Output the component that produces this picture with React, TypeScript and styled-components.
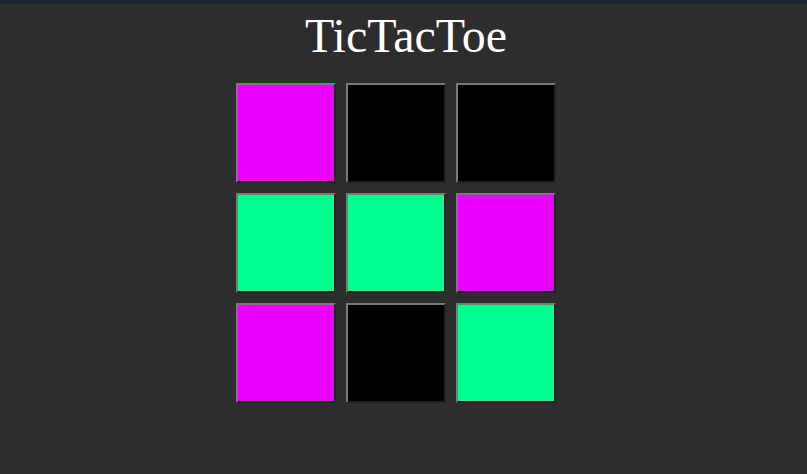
import React from "react";
import styled, { createGlobalStyle } from "styled-components";

const Global = createGlobalStyle`
  html, body { margin: 0; padding: 0; background: #2d2d2d; }
  body { font-family: "Liberation Serif", "Times New Roman", serif; }
`;

const Page = styled.div`
  min-height: 474px;
  border-top: 4px solid #1c2234;
  box-sizing: border-box;
  display: flex;
  flex-direction: column;
  align-items: center;
`;

const Title = styled.h1`
  margin: 0 0 0 5px;
  padding-top: 4px;
  font-family: "Liberation Serif", "Times New Roman", serif;
  font-weight: 400;
  font-size: 48px;
  line-height: 56px;
  color: #ffffff;
`;

const BoardWrap = styled.div`
  align-self: stretch;
  display: flex;
  justify-content: center;
  padding-right: 16px;
  margin-top: 19px;
`;

const Board = styled.div`
  display: grid;
  grid-template-columns: repeat(3, 100px);
  grid-auto-rows: 100px;
  gap: 10px;
`;

const colors: Record<string, string> = {
  X: "#ea00ff",
  O: "#00ff8f",
  "": "#000000",
};

const Cell = styled.button<{ $mark: string }>`
  width: 100px;
  height: 100px;
  padding: 0;
  box-sizing: border-box;
  border: 2px solid;
  border-color: #7a7a7a #222222 #222222 #7a7a7a;
  background: ${(p) => colors[p.$mark]};
`;

const cells = ["X", "", "", "O", "O", "X", "X", "", "O"];

export default function App() {
  return (
    <>
      <Global />
      <Page>
        <Title>TicTacToe</Title>
        <BoardWrap>
          <Board>
            {cells.map((m, i) => (
              <Cell key={i} $mark={m} aria-label={`cell ${i}`} />
            ))}
          </Board>
        </BoardWrap>
      </Page>
    </>
  );
}
